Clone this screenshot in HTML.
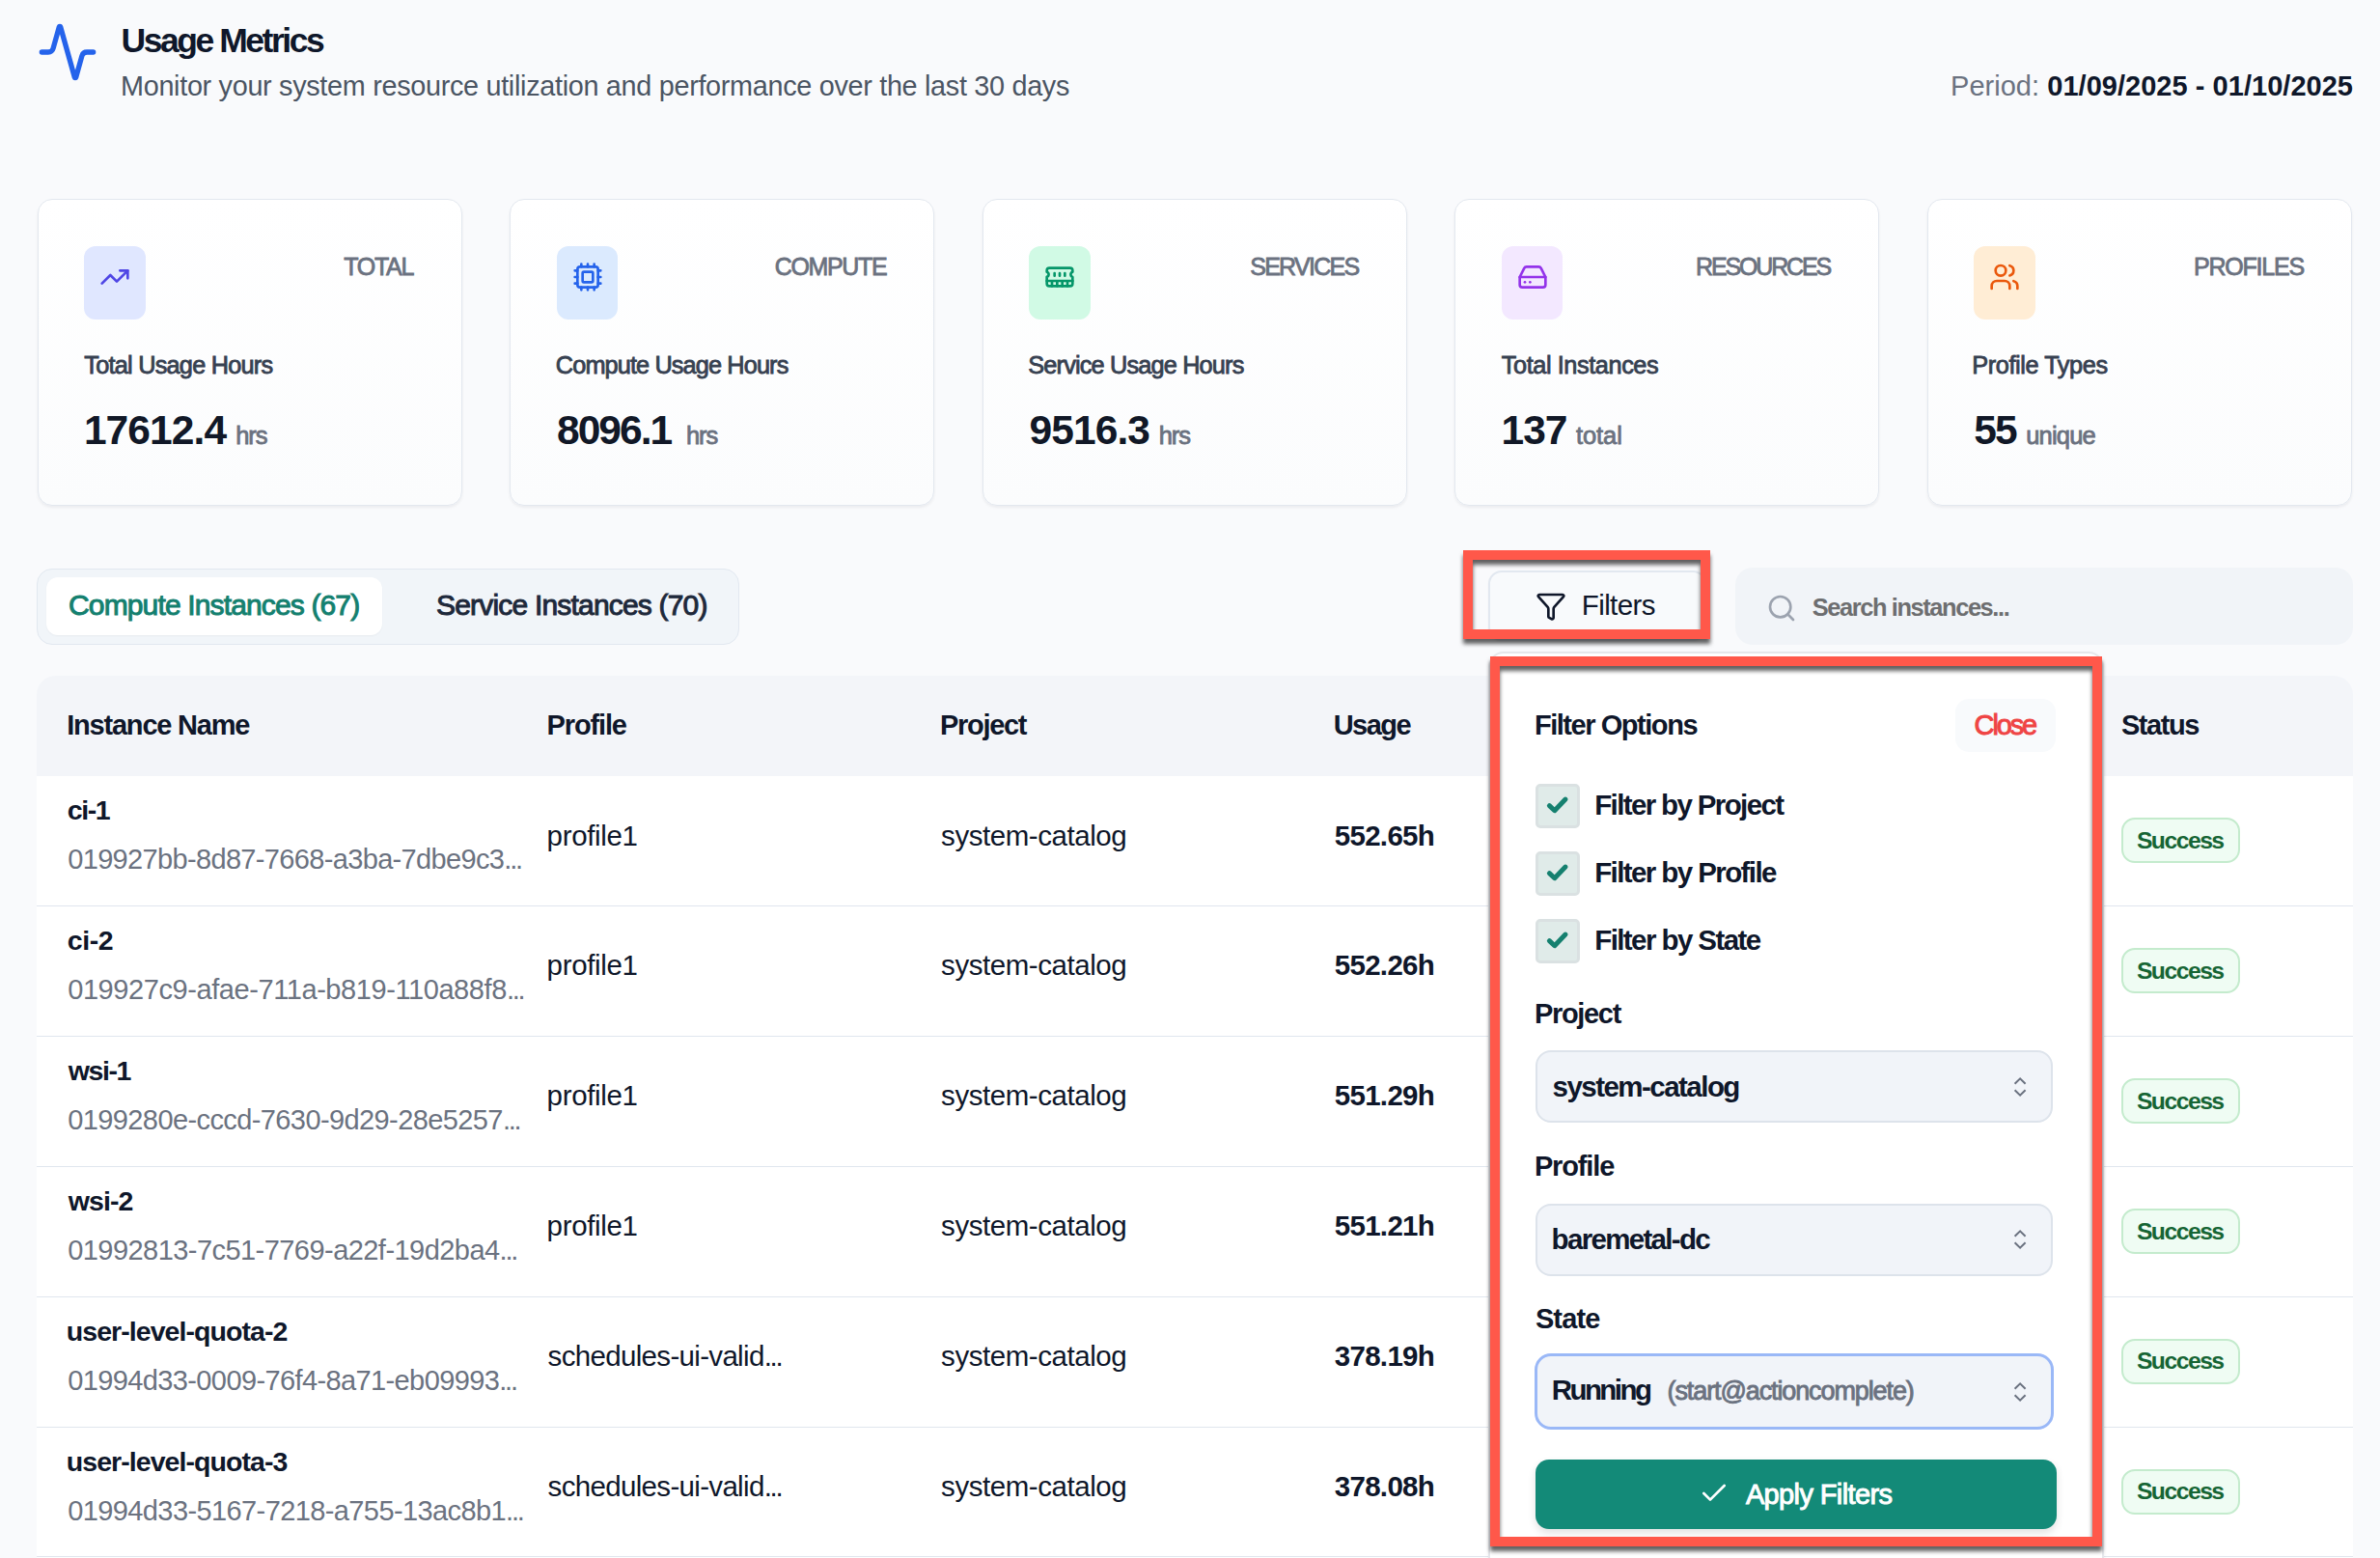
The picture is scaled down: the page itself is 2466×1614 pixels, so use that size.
<!DOCTYPE html>
<html><head><meta charset="utf-8"><title>Usage Metrics</title>
<style>
html,body{margin:0;padding:0;}
body{width:2466px;height:1614px;overflow:hidden;position:relative;background:#f9fafc;font-family:"Liberation Sans",sans-serif;}
.b{position:absolute;}
.ic{position:absolute;overflow:visible;}
.t{position:absolute;white-space:nowrap;}
.red{border:10px solid #ff584a;box-sizing:border-box;filter:drop-shadow(0 5px 2px rgba(0,0,0,0.62));}
</style></head><body>
<svg class="ic" style="left:38px;top:22px;width:64px;height:64px;" viewBox="0 0 24 24" fill="none" stroke="#2563eb" stroke-width="2" stroke-linecap="round" stroke-linejoin="round"><path d="M22 12h-2.48a2 2 0 0 0-1.93 1.46l-2.35 8.36a.25.25 0 0 1-.48 0L9.24 2.18a.25.25 0 0 0-.48 0l-2.35 8.36A2 2 0 0 1 4.49 12H2"/></svg>
<div class="b" style="left:38.6px;top:206.3px;width:440.4px;height:318.2px;background:linear-gradient(180deg,#ffffff,#fbfcfd);border:1.5px solid #e3e8ef;border-radius:15px;box-shadow:0 2px 3px rgba(15,23,42,0.06);box-sizing:border-box"></div>
<div class="b" style="left:87.2px;top:255px;width:63.6px;height:76px;background:#e0e7ff;border-radius:12px"></div>
<svg class="ic" style="left:103.0px;top:271px;width:32px;height:32px;" viewBox="0 0 24 24" fill="none" stroke="#4f46e5" stroke-width="2" stroke-linecap="round" stroke-linejoin="round"><polyline points="22 7 13.5 15.5 8.5 10.5 2 17"/><polyline points="16 7 22 7 22 13"/></svg>
<div class="b" style="left:528.1px;top:206.3px;width:440.4px;height:318.2px;background:linear-gradient(180deg,#ffffff,#fbfcfd);border:1.5px solid #e3e8ef;border-radius:15px;box-shadow:0 2px 3px rgba(15,23,42,0.06);box-sizing:border-box"></div>
<div class="b" style="left:576.7px;top:255px;width:63.6px;height:76px;background:#dbeafe;border-radius:12px"></div>
<svg class="ic" style="left:592.5px;top:271px;width:32px;height:32px;" viewBox="0 0 24 24" fill="none" stroke="#2563eb" stroke-width="2" stroke-linecap="round" stroke-linejoin="round"><rect width="16" height="16" x="4" y="4" rx="2"/><rect width="8" height="8" x="8" y="8" rx="1"/><path d="M12 2v2M12 20v2M17 2v2M17 20v2M2 12h2M2 17h2M2 7h2M20 12h2M20 17h2M20 7h2M7 2v2M7 20v2"/></svg>
<div class="b" style="left:1017.6px;top:206.3px;width:440.4px;height:318.2px;background:linear-gradient(180deg,#ffffff,#fbfcfd);border:1.5px solid #e3e8ef;border-radius:15px;box-shadow:0 2px 3px rgba(15,23,42,0.06);box-sizing:border-box"></div>
<div class="b" style="left:1066.2px;top:255px;width:63.6px;height:76px;background:#d1fae5;border-radius:12px"></div>
<svg class="ic" style="left:1082.0px;top:271px;width:32px;height:32px;" viewBox="0 0 24 24" fill="none" stroke="#059669" stroke-width="2" stroke-linecap="round" stroke-linejoin="round"><path d="M6 19v-3M10 19v-3M14 19v-3M18 19v-3M8 11V9M16 11V9M12 11V9M2 15h20"/><path d="M2 7a2 2 0 0 1 2-2h16a2 2 0 0 1 2 2v1.1a2 2 0 0 0 0 3.837V17a2 2 0 0 1-2 2H4a2 2 0 0 1-2-2v-5.1a2 2 0 0 0 0-3.837Z"/></svg>
<div class="b" style="left:1507.1px;top:206.3px;width:440.4px;height:318.2px;background:linear-gradient(180deg,#ffffff,#fbfcfd);border:1.5px solid #e3e8ef;border-radius:15px;box-shadow:0 2px 3px rgba(15,23,42,0.06);box-sizing:border-box"></div>
<div class="b" style="left:1555.6999999999998px;top:255px;width:63.6px;height:76px;background:#f3e8ff;border-radius:12px"></div>
<svg class="ic" style="left:1571.4999999999998px;top:271px;width:32px;height:32px;" viewBox="0 0 24 24" fill="none" stroke="#9333ea" stroke-width="2" stroke-linecap="round" stroke-linejoin="round"><line x1="22" x2="2" y1="12" y2="12"/><path d="M5.45 5.11 2 12v6a2 2 0 0 0 2 2h16a2 2 0 0 0 2-2v-6l-3.45-6.89A2 2 0 0 0 16.76 4H7.24a2 2 0 0 0-1.79 1.11z"/><line x1="6" x2="6.01" y1="16" y2="16"/><line x1="10" x2="10.01" y1="16" y2="16"/></svg>
<div class="b" style="left:1996.6px;top:206.3px;width:440.4px;height:318.2px;background:linear-gradient(180deg,#ffffff,#fbfcfd);border:1.5px solid #e3e8ef;border-radius:15px;box-shadow:0 2px 3px rgba(15,23,42,0.06);box-sizing:border-box"></div>
<div class="b" style="left:2045.1999999999998px;top:255px;width:63.6px;height:76px;background:#ffedd5;border-radius:12px"></div>
<svg class="ic" style="left:2061.0px;top:271px;width:32px;height:32px;" viewBox="0 0 24 24" fill="none" stroke="#ea580c" stroke-width="2" stroke-linecap="round" stroke-linejoin="round"><path d="M16 21v-2a4 4 0 0 0-4-4H6a4 4 0 0 0-4 4v2"/><circle cx="9" cy="7" r="4"/><path d="M22 21v-2a4 4 0 0 0-3-3.87"/><path d="M16 3.13a4 4 0 0 1 0 7.75"/></svg>
<div class="b" style="left:38.2px;top:588.5px;width:727.8px;height:79px;background:#f1f5f9;border:1.5px solid #e2e8f0;border-radius:16px;box-sizing:border-box"></div>
<div class="b" style="left:48px;top:598px;width:347.6px;height:59.5px;background:#ffffff;border-radius:12px;box-shadow:0 1px 2px rgba(0,0,0,0.04)"></div>
<div class="b" style="left:1542px;top:591px;width:226px;height:73px;background:#f8fafc;border:2px solid #e2e8f0;border-radius:14px;box-sizing:border-box;box-shadow:0 1px 2px rgba(0,0,0,0.05)"></div>
<svg class="ic" style="left:1591px;top:611.7px;width:32px;height:32px;" viewBox="0 0 24 24" fill="none" stroke="#0f172a" stroke-width="2" stroke-linecap="round" stroke-linejoin="round"><path d="M10 20a1 1 0 0 0 .553.895l2 1A1 1 0 0 0 14 21v-7a2 2 0 0 1 .517-1.341L21.74 4.67A1 1 0 0 0 21 3H3a1 1 0 0 0-.742 1.67l7.225 7.989A2 2 0 0 1 10 14z"/></svg>
<div class="b" style="left:1798px;top:588px;width:640.2px;height:80px;background:#f1f4f8;border-radius:18px"></div>
<svg class="ic" style="left:1829.6px;top:614.1px;width:32px;height:32px;" viewBox="0 0 24 24" fill="none" stroke="#9ca3af" stroke-width="2" stroke-linecap="round" stroke-linejoin="round"><circle cx="11" cy="11" r="8"/><path d="m21 21-4.3-4.3"/></svg>
<div class="b" style="left:38px;top:700px;width:2400px;height:104px;background:#f3f5f9;border-radius:20px 20px 0 0"></div>
<div class="b" style="left:38px;top:804px;width:2400px;height:810px;background:#ffffff"></div>
<div class="b" style="left:38px;top:937.9px;width:2400px;height:1px;background:#e0e6ee"></div>
<div class="b" style="left:2198.2px;top:847.3px;width:122.4px;height:47px;background:#effcf3;border:2px solid #c4ebcd;border-radius:14px;box-sizing:border-box"></div>
<div class="b" style="left:38px;top:1072.8px;width:2400px;height:1px;background:#e0e6ee"></div>
<div class="b" style="left:2198.2px;top:982.1999999999999px;width:122.4px;height:47px;background:#effcf3;border:2px solid #c4ebcd;border-radius:14px;box-sizing:border-box"></div>
<div class="b" style="left:38px;top:1207.7px;width:2400px;height:1px;background:#e0e6ee"></div>
<div class="b" style="left:2198.2px;top:1117.1px;width:122.4px;height:47px;background:#effcf3;border:2px solid #c4ebcd;border-radius:14px;box-sizing:border-box"></div>
<div class="b" style="left:38px;top:1342.6000000000001px;width:2400px;height:1px;background:#e0e6ee"></div>
<div class="b" style="left:2198.2px;top:1252.0px;width:122.4px;height:47px;background:#effcf3;border:2px solid #c4ebcd;border-radius:14px;box-sizing:border-box"></div>
<div class="b" style="left:38px;top:1477.5px;width:2400px;height:1px;background:#e0e6ee"></div>
<div class="b" style="left:2198.2px;top:1386.8999999999999px;width:122.4px;height:47px;background:#effcf3;border:2px solid #c4ebcd;border-radius:14px;box-sizing:border-box"></div>
<div class="b" style="left:38px;top:1612.4px;width:2400px;height:1px;background:#e0e6ee"></div>
<div class="b" style="left:2198.2px;top:1521.8px;width:122.4px;height:47px;background:#effcf3;border:2px solid #c4ebcd;border-radius:14px;box-sizing:border-box"></div>
<div class="b" style="left:1542px;top:675px;width:638px;height:1000px;background:#ffffff;border:2px solid #e5e7eb;border-radius:16px;box-sizing:border-box;box-shadow:0 2px 4px rgba(15,23,42,0.06)"></div>
<div class="b" style="left:2026.2px;top:724px;width:104.3px;height:55.2px;background:#f8fafc;border-radius:14px"></div>
<div class="b" style="left:1591px;top:812.0px;width:46px;height:46px;background:#e0ebe9;border:3px solid #dae1e2;border-radius:5px;box-sizing:border-box"></div>
<svg class="ic" style="left:1591px;top:812.0px;width:46px;height:46px" viewBox="0 0 46 46" fill="none" stroke="#15806f" stroke-width="5" stroke-linecap="round" stroke-linejoin="round"><path d="M14.4 22.6 19.8 27.7 31 16.1"/></svg>
<div class="b" style="left:1591px;top:881.9px;width:46px;height:46px;background:#e0ebe9;border:3px solid #dae1e2;border-radius:5px;box-sizing:border-box"></div>
<svg class="ic" style="left:1591px;top:881.9px;width:46px;height:46px" viewBox="0 0 46 46" fill="none" stroke="#15806f" stroke-width="5" stroke-linecap="round" stroke-linejoin="round"><path d="M14.4 22.6 19.8 27.7 31 16.1"/></svg>
<div class="b" style="left:1591px;top:951.8px;width:46px;height:46px;background:#e0ebe9;border:3px solid #dae1e2;border-radius:5px;box-sizing:border-box"></div>
<svg class="ic" style="left:1591px;top:951.8px;width:46px;height:46px" viewBox="0 0 46 46" fill="none" stroke="#15806f" stroke-width="5" stroke-linecap="round" stroke-linejoin="round"><path d="M14.4 22.6 19.8 27.7 31 16.1"/></svg>
<div class="b" style="left:1591.3px;top:1088.3px;width:535.3px;height:75.1px;background:#f1f4f9;border:2px solid #dde3eb;border-radius:16px;box-sizing:border-box"></div>
<svg class="ic" style="left:2085px;top:1113.8px;width:16px;height:24px" viewBox="0 0 16 24" fill="none" stroke="#6b7280" stroke-width="2" stroke-linecap="butt" stroke-linejoin="miter"><path d="M2.6 8.8 8.1 3.4 13.6 8.8"/><path d="M2.6 15.2 8.1 20.6 13.6 15.2"/></svg>
<div class="b" style="left:1591.3px;top:1246.7px;width:535.3px;height:75.1px;background:#f1f4f9;border:2px solid #dde3eb;border-radius:16px;box-sizing:border-box"></div>
<svg class="ic" style="left:2085px;top:1272.2px;width:16px;height:24px" viewBox="0 0 16 24" fill="none" stroke="#6b7280" stroke-width="2" stroke-linecap="butt" stroke-linejoin="miter"><path d="M2.6 8.8 8.1 3.4 13.6 8.8"/><path d="M2.6 15.2 8.1 20.6 13.6 15.2"/></svg>
<div class="b" style="left:1589.6px;top:1402.3px;width:538.8px;height:78.8px;background:#f1f4f9;border:3px solid #9ab8f7;border-radius:17px;box-sizing:border-box"></div>
<svg class="ic" style="left:2085px;top:1430px;width:16px;height:24px" viewBox="0 0 16 24" fill="none" stroke="#6b7280" stroke-width="2" stroke-linecap="butt" stroke-linejoin="miter"><path d="M2.6 8.8 8.1 3.4 13.6 8.8"/><path d="M2.6 15.2 8.1 20.6 13.6 15.2"/></svg>
<div class="b" style="left:1591px;top:1512.2px;width:539.7px;height:71.4px;background:#138a78;border-radius:14px;box-shadow:0 4px 8px rgba(0,0,0,0.12)"></div>
<svg class="ic" style="left:1760px;top:1531px;width:32px;height:32px;" viewBox="0 0 24 24" fill="none" stroke="#ffffff" stroke-width="2" stroke-linecap="round" stroke-linejoin="round"><path d="M20 6 9 17l-5-5"/></svg>
<div class="t" id="title" style="left:125.5px;top:24.80px;font-size:35.5px;line-height:35.5px;font-weight:700;color:#0f172a;letter-spacing:-2.455px;">Usage Metrics</div>
<div class="t" id="sub" style="left:125.0px;top:74.80px;font-size:28.8px;line-height:28.8px;font-weight:400;color:#4b5563;letter-spacing:-0.304px;">Monitor your system resource utilization and performance over the last 30 days</div>
<div class="t" id="period" style="right:27.953125px;top:74.80px;font-size:29px;line-height:29px;font-weight:400;color:#0f172a;letter-spacing:0.033px;"><span style="color:#6b7280">Period:</span> <b style="font-weight:700">01/09/2025 - 01/10/2025</b></div>
<div class="t" id="lab0" style="right:2038.034375px;top:263.90px;font-size:25px;line-height:25px;font-weight:400;color:#6b7280;letter-spacing:-1.325px;-webkit-text-stroke:0.83px currentColor;">TOTAL</div>
<div class="t" id="ttl0" style="left:87.30000000000001px;top:366.00px;font-size:25.3px;line-height:25.3px;font-weight:400;color:#374151;letter-spacing:-0.764px;-webkit-text-stroke:0.83px currentColor;">Total Usage Hours</div>
<div class="t" id="val0" style="left:86.9px;top:424.90px;font-size:42.5px;line-height:42.5px;font-weight:700;color:#111827;letter-spacing:-0.912px;">17612.4</div>
<div class="t" id="lab1" style="right:1547.628125px;top:263.90px;font-size:25px;line-height:25px;font-weight:400;color:#6b7280;letter-spacing:-1.333px;-webkit-text-stroke:0.83px currentColor;">COMPUTE</div>
<div class="t" id="ttl1" style="left:575.8000000000001px;top:366.00px;font-size:25.3px;line-height:25.3px;font-weight:400;color:#374151;letter-spacing:-0.878px;-webkit-text-stroke:0.83px currentColor;">Compute Usage Hours</div>
<div class="t" id="val1" style="left:577.0px;top:424.90px;font-size:42.5px;line-height:42.5px;font-weight:700;color:#111827;letter-spacing:-1.980px;">8096.1</div>
<div class="t" id="lab2" style="right:1058.534375px;top:263.90px;font-size:25px;line-height:25px;font-weight:400;color:#6b7280;letter-spacing:-1.714px;-webkit-text-stroke:0.83px currentColor;">SERVICES</div>
<div class="t" id="ttl2" style="left:1065.3px;top:366.00px;font-size:25.3px;line-height:25.3px;font-weight:400;color:#374151;letter-spacing:-0.834px;-webkit-text-stroke:0.83px currentColor;">Service Usage Hours</div>
<div class="t" id="val2" style="left:1066.6px;top:424.90px;font-size:42.5px;line-height:42.5px;font-weight:700;color:#111827;letter-spacing:-0.920px;">9516.3</div>
<div class="t" id="lab3" style="right:569.9406250000002px;top:263.90px;font-size:25px;line-height:25px;font-weight:400;color:#6b7280;letter-spacing:-2.151px;-webkit-text-stroke:0.83px currentColor;">RESOURCES</div>
<div class="t" id="ttl3" style="left:1555.8px;top:366.00px;font-size:25.3px;line-height:25.3px;font-weight:400;color:#374151;letter-spacing:-0.419px;-webkit-text-stroke:0.83px currentColor;">Total Instances</div>
<div class="t" id="val3" style="left:1555.5px;top:424.90px;font-size:42.5px;line-height:42.5px;font-weight:700;color:#111827;letter-spacing:-0.950px;">137</div>
<div class="t" id="lab4" style="right:79.12812500000018px;top:263.90px;font-size:25px;line-height:25px;font-weight:400;color:#6b7280;letter-spacing:-1.219px;-webkit-text-stroke:0.83px currentColor;">PROFILES</div>
<div class="t" id="ttl4" style="left:2043.3px;top:366.00px;font-size:25.3px;line-height:25.3px;font-weight:400;color:#374151;letter-spacing:-0.417px;-webkit-text-stroke:0.83px currentColor;">Profile Types</div>
<div class="t" id="val4" style="left:2045.2px;top:424.90px;font-size:42.5px;line-height:42.5px;font-weight:700;color:#111827;letter-spacing:-1.900px;">55</div>
<div class="t" id="tab1" style="left:71.0px;top:612.00px;font-size:30px;line-height:30px;font-weight:400;color:#14806f;letter-spacing:-0.857px;-webkit-text-stroke:0.99px currentColor;">Compute Instances (67)</div>
<div class="t" id="tab2" style="left:452.0px;top:612.00px;font-size:30px;line-height:30px;font-weight:400;color:#1e293b;letter-spacing:-0.810px;-webkit-text-stroke:0.99px currentColor;">Service Instances (70)</div>
<div class="t" id="filters" style="left:1638.8px;top:612.00px;font-size:29.5px;line-height:29.5px;font-weight:400;color:#0f172a;letter-spacing:-0.605px;">Filters</div>
<div class="t" id="search" style="left:1877.8px;top:617.10px;font-size:25.4px;line-height:25.4px;font-weight:600;color:#6d6e70;letter-spacing:-1.396px;">Search instances...</div>
<div class="t" id="h_name" style="left:69.2px;top:737.20px;font-size:29px;line-height:29px;font-weight:600;color:#0f172a;letter-spacing:-1.200px;">Instance Name</div>
<div class="t" id="h_prof" style="left:566.6px;top:737.20px;font-size:29px;line-height:29px;font-weight:600;color:#0f172a;letter-spacing:-1.139px;">Profile</div>
<div class="t" id="h_proj" style="left:974.1px;top:737.20px;font-size:29px;line-height:29px;font-weight:600;color:#0f172a;letter-spacing:-1.319px;">Project</div>
<div class="t" id="h_usage" style="left:1381.7px;top:737.20px;font-size:29px;line-height:29px;font-weight:600;color:#0f172a;letter-spacing:-1.525px;">Usage</div>
<div class="t" id="h_status" style="left:2197.9px;top:736.50px;font-size:29px;line-height:29px;font-weight:600;color:#0f172a;letter-spacing:-1.440px;">Status</div>
<div class="t" id="nm0" style="left:69.8px;top:825.00px;font-size:28.5px;line-height:28.5px;font-weight:600;color:#0f172a;letter-spacing:-1.402px;">ci-1</div>
<div class="t" id="uid0" style="left:70.2px;top:876.00px;font-size:29px;line-height:29px;font-weight:400;color:#6b7280;letter-spacing:-0.657px;">019927bb-8d87-7668-a3ba-7dbe9c3<span style="letter-spacing:-2.2px">...</span></div>
<div class="t" id="pf0" style="left:566.6px;top:850.50px;font-size:29.5px;line-height:29.5px;font-weight:400;color:#0f172a;letter-spacing:-0.336px;">profile1</div>
<div class="t" id="pj0" style="left:975.1px;top:850.50px;font-size:29.5px;line-height:29.5px;font-weight:400;color:#0f172a;letter-spacing:-0.446px;">system-catalog</div>
<div class="t" id="us0" style="left:1382.7px;top:850.50px;font-size:29.5px;line-height:29.5px;font-weight:600;color:#0f172a;letter-spacing:-0.681px;">552.65h</div>
<div class="t" id="bd0" style="left:2213.9px;top:858.80px;font-size:24.7px;line-height:24.7px;font-weight:600;color:#166534;letter-spacing:-1.500px;">Success</div>
<div class="t" id="nm1" style="left:69.8px;top:959.90px;font-size:28.5px;line-height:28.5px;font-weight:600;color:#0f172a;letter-spacing:-0.460px;">ci-2</div>
<div class="t" id="uid1" style="left:70.2px;top:1010.90px;font-size:29px;line-height:29px;font-weight:400;color:#6b7280;letter-spacing:-0.421px;">019927c9-afae-711a-b819-110a88f8<span style="letter-spacing:-2.2px">...</span></div>
<div class="t" id="pf1" style="left:566.6px;top:985.40px;font-size:29.5px;line-height:29.5px;font-weight:400;color:#0f172a;letter-spacing:-0.336px;">profile1</div>
<div class="t" id="pj1" style="left:975.1px;top:985.40px;font-size:29.5px;line-height:29.5px;font-weight:400;color:#0f172a;letter-spacing:-0.446px;">system-catalog</div>
<div class="t" id="us1" style="left:1382.7px;top:985.40px;font-size:29.5px;line-height:29.5px;font-weight:600;color:#0f172a;letter-spacing:-0.681px;">552.26h</div>
<div class="t" id="bd1" style="left:2213.9px;top:993.70px;font-size:24.7px;line-height:24.7px;font-weight:600;color:#166534;letter-spacing:-1.500px;">Success</div>
<div class="t" id="nm2" style="left:70.8px;top:1094.80px;font-size:28.5px;line-height:28.5px;font-weight:600;color:#0f172a;letter-spacing:-1.400px;">wsi-1</div>
<div class="t" id="uid2" style="left:70.2px;top:1145.80px;font-size:29px;line-height:29px;font-weight:400;color:#6b7280;letter-spacing:-0.597px;">0199280e-cccd-7630-9d29-28e5257<span style="letter-spacing:-2.2px">...</span></div>
<div class="t" id="pf2" style="left:566.6px;top:1120.30px;font-size:29.5px;line-height:29.5px;font-weight:400;color:#0f172a;letter-spacing:-0.336px;">profile1</div>
<div class="t" id="pj2" style="left:975.1px;top:1120.30px;font-size:29.5px;line-height:29.5px;font-weight:400;color:#0f172a;letter-spacing:-0.446px;">system-catalog</div>
<div class="t" id="us2" style="left:1382.7px;top:1120.30px;font-size:29.5px;line-height:29.5px;font-weight:600;color:#0f172a;letter-spacing:-0.681px;">551.29h</div>
<div class="t" id="bd2" style="left:2213.9px;top:1128.60px;font-size:24.7px;line-height:24.7px;font-weight:600;color:#166534;letter-spacing:-1.500px;">Success</div>
<div class="t" id="nm3" style="left:70.8px;top:1229.70px;font-size:28.5px;line-height:28.5px;font-weight:600;color:#0f172a;letter-spacing:-0.950px;">wsi-2</div>
<div class="t" id="uid3" style="left:70.2px;top:1280.70px;font-size:29px;line-height:29px;font-weight:400;color:#6b7280;letter-spacing:-0.550px;">01992813-7c51-7769-a22f-19d2ba4<span style="letter-spacing:-2.2px">...</span></div>
<div class="t" id="pf3" style="left:566.6px;top:1255.20px;font-size:29.5px;line-height:29.5px;font-weight:400;color:#0f172a;letter-spacing:-0.336px;">profile1</div>
<div class="t" id="pj3" style="left:975.1px;top:1255.20px;font-size:29.5px;line-height:29.5px;font-weight:400;color:#0f172a;letter-spacing:-0.446px;">system-catalog</div>
<div class="t" id="us3" style="left:1382.7px;top:1255.20px;font-size:29.5px;line-height:29.5px;font-weight:600;color:#0f172a;letter-spacing:-0.681px;">551.21h</div>
<div class="t" id="bd3" style="left:2213.9px;top:1263.50px;font-size:24.7px;line-height:24.7px;font-weight:600;color:#166534;letter-spacing:-1.500px;">Success</div>
<div class="t" id="nm4" style="left:68.8px;top:1364.60px;font-size:28.5px;line-height:28.5px;font-weight:600;color:#0f172a;letter-spacing:-0.941px;">user-level-quota-2</div>
<div class="t" id="uid4" style="left:70.2px;top:1415.60px;font-size:29px;line-height:29px;font-weight:400;color:#6b7280;letter-spacing:-0.613px;">01994d33-0009-76f4-8a71-eb09993<span style="letter-spacing:-2.2px">...</span></div>
<div class="t" id="pf4" style="left:567.6px;top:1390.10px;font-size:29.5px;line-height:29.5px;font-weight:400;color:#0f172a;letter-spacing:-0.672px;">schedules-ui-valid<span style="letter-spacing:-2.2px">...</span></div>
<div class="t" id="pj4" style="left:975.1px;top:1390.10px;font-size:29.5px;line-height:29.5px;font-weight:400;color:#0f172a;letter-spacing:-0.446px;">system-catalog</div>
<div class="t" id="us4" style="left:1382.7px;top:1390.10px;font-size:29.5px;line-height:29.5px;font-weight:600;color:#0f172a;letter-spacing:-0.681px;">378.19h</div>
<div class="t" id="bd4" style="left:2213.9px;top:1398.40px;font-size:24.7px;line-height:24.7px;font-weight:600;color:#166534;letter-spacing:-1.500px;">Success</div>
<div class="t" id="nm5" style="left:68.8px;top:1499.50px;font-size:28.5px;line-height:28.5px;font-weight:600;color:#0f172a;letter-spacing:-0.941px;">user-level-quota-3</div>
<div class="t" id="uid5" style="left:70.2px;top:1550.50px;font-size:29px;line-height:29px;font-weight:400;color:#6b7280;letter-spacing:-0.601px;">01994d33-5167-7218-a755-13ac8b1<span style="letter-spacing:-2.2px">...</span></div>
<div class="t" id="pf5" style="left:567.6px;top:1525.00px;font-size:29.5px;line-height:29.5px;font-weight:400;color:#0f172a;letter-spacing:-0.672px;">schedules-ui-valid<span style="letter-spacing:-2.2px">...</span></div>
<div class="t" id="pj5" style="left:975.1px;top:1525.00px;font-size:29.5px;line-height:29.5px;font-weight:400;color:#0f172a;letter-spacing:-0.446px;">system-catalog</div>
<div class="t" id="us5" style="left:1382.7px;top:1525.00px;font-size:29.5px;line-height:29.5px;font-weight:600;color:#0f172a;letter-spacing:-0.681px;">378.08h</div>
<div class="t" id="bd5" style="left:2213.9px;top:1533.30px;font-size:24.7px;line-height:24.7px;font-weight:600;color:#166534;letter-spacing:-1.500px;">Success</div>
<div class="t" id="fo" style="left:1589.9px;top:737.00px;font-size:29px;line-height:29px;font-weight:600;color:#0f172a;letter-spacing:-1.451px;">Filter Options</div>
<div class="t" id="close" style="left:2045.6px;top:737.00px;font-size:29px;line-height:29px;font-weight:400;color:#ef4444;letter-spacing:-2.150px;-webkit-text-stroke:0.96px currentColor;">Close</div>
<div class="t" id="cb0" style="left:1652.2px;top:819.00px;font-size:29.5px;line-height:29.5px;font-weight:600;color:#0f172a;letter-spacing:-1.632px;">Filter by Project</div>
<div class="t" id="cb1" style="left:1652.2px;top:888.90px;font-size:29.5px;line-height:29.5px;font-weight:600;color:#0f172a;letter-spacing:-1.594px;">Filter by Profile</div>
<div class="t" id="cb2" style="left:1652.2px;top:958.80px;font-size:29.5px;line-height:29.5px;font-weight:600;color:#0f172a;letter-spacing:-1.581px;">Filter by State</div>
<div class="t" id="sl0" style="left:1589.9px;top:1036.20px;font-size:29px;line-height:29px;font-weight:600;color:#0f172a;letter-spacing:-1.319px;">Project</div>
<div class="t" id="sv0" style="left:1608.6px;top:1111.00px;font-size:29.5px;line-height:29.5px;font-weight:600;color:#0f172a;letter-spacing:-1.538px;">system-catalog</div>
<div class="t" id="sl1" style="left:1589.9px;top:1194.00px;font-size:29px;line-height:29px;font-weight:600;color:#0f172a;letter-spacing:-1.139px;">Profile</div>
<div class="t" id="sv1" style="left:1607.6px;top:1269.40px;font-size:29.5px;line-height:29.5px;font-weight:600;color:#0f172a;letter-spacing:-1.682px;">baremetal-dc</div>
<div class="t" id="sl2" style="left:1590.9px;top:1352.40px;font-size:29px;line-height:29px;font-weight:600;color:#0f172a;letter-spacing:-0.875px;">State</div>
<div class="t" id="run" style="left:1607.7px;top:1425.30px;font-size:29.5px;line-height:29.5px;font-weight:600;color:#0f172a;letter-spacing:-2.561px;">Running</div>
<div class="t" id="runs" style="left:1727.6px;top:1427.50px;font-size:27px;line-height:27px;font-weight:400;color:#6b7280;letter-spacing:-1.110px;-webkit-text-stroke:0.89px currentColor;">(start@actioncomplete)</div>
<div class="t" id="apply" style="left:1808.9px;top:1533.50px;font-size:29px;line-height:29px;font-weight:400;color:#ffffff;letter-spacing:-0.622px;-webkit-text-stroke:0.96px currentColor;">Apply Filters</div>
<div class="t" id="unit0" style="left:244.2px;top:438.90px;font-size:25.5px;line-height:25.5px;font-weight:400;color:#6b7280;letter-spacing:-1.050px;-webkit-text-stroke:0.84px currentColor;">hrs</div>
<div class="t" id="unit1" style="left:711.0px;top:438.90px;font-size:25.5px;line-height:25.5px;font-weight:400;color:#6b7280;letter-spacing:-1.100px;-webkit-text-stroke:0.84px currentColor;">hrs</div>
<div class="t" id="unit2" style="left:1200.7px;top:438.90px;font-size:25.5px;line-height:25.5px;font-weight:400;color:#6b7280;letter-spacing:-1.050px;-webkit-text-stroke:0.84px currentColor;">hrs</div>
<div class="t" id="unit3" style="left:1632.9px;top:438.90px;font-size:25.5px;line-height:25.5px;font-weight:400;color:#6b7280;letter-spacing:-0.050px;-webkit-text-stroke:0.84px currentColor;">total</div>
<div class="t" id="unit4" style="left:2099.2px;top:438.90px;font-size:25.5px;line-height:25.5px;font-weight:400;color:#6b7280;letter-spacing:-0.800px;-webkit-text-stroke:0.84px currentColor;">unique</div>
<div class="b red" style="left:1516px;top:570px;width:256px;height:92px"></div>
<div class="b red" style="left:1544px;top:680px;width:634px;height:922px"></div>
</body></html>
